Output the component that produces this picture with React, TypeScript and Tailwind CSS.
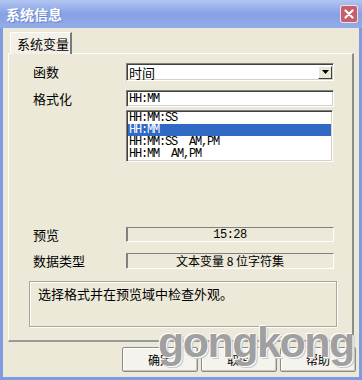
const cjk = { fontFamily: '"SimSun", "Noto Sans CJK SC", "Liberation Sans", sans-serif' };
const mono = { fontFamily: '"Liberation Mono", "Noto Sans CJK SC", monospace' };

const formats = ["HH:MM:SS", "HH:MM", "HH:MM:SS  AM,PM", "HH:MM  AM,PM"];

function Sunken({ className = "", children }: { className?: string; children?: React.ReactNode }) {
  return (
    <div
      className={
        "border border-t-[#808080] border-l-[#808080] border-b-white border-r-white shadow-[inset_1px_1px_0_#404040,inset_-1px_-1px_0_#d4d0c8] " +
        className
      }
    >
      {children}
    </div>
  );
}

function Label({ text }: { text: string }) {
  return (
    <div className="w-[93px] text-[13px] leading-[16px] text-black" style={cjk}>
      {text}
    </div>
  );
}

function Button({ text }: { text: string }) {
  return (
    <div
      className="w-[76px] h-[25px] flex items-center justify-center bg-[#f4f3ee] border border-[#8a8a8a] rounded-[2px] shadow-[inset_-1px_-1px_0_#c9c7ba,inset_1px_1px_0_#ffffff] text-[12px] text-black"
      style={cjk}
    >
      {text}
    </div>
  );
}

export default function App() {
  return (
    <div className="relative w-[362px] h-[380px] bg-[#7f9be0] flex flex-col overflow-hidden">
      {/* title bar */}
      <div className="h-[28px] flex items-center justify-between pl-[6px] pr-[4px] bg-gradient-to-b from-[#b3c6f2] via-[#87a1e4] to-[#93ace8]">
        <span className="text-white font-bold text-[14px] leading-none [text-shadow:1px_1px_0_#6a84c8]" style={cjk}>
          系统信息
        </span>
        <div className="w-[18px] h-[18px] rounded-[3px] bg-[#c45f6c] border border-white/80 flex items-center justify-center">
          <svg width="10" height="10" viewBox="0 0 10 10">
            <path d="M1.5 1.5 L8.5 8.5 M8.5 1.5 L1.5 8.5" stroke="white" strokeWidth="2.2" strokeLinecap="round" />
          </svg>
        </div>
      </div>

      {/* body */}
      <div className="flex-1 mx-[3px] mb-[3px] bg-[#ece9d8] pl-[5px] pr-[5px] pt-[4px] flex flex-col">
        {/* tab */}
        <div className="ml-[2px] w-[62px] h-[22px] bg-[#f3f1e7] border-t border-l border-white border-r-2 border-r-[#7a7a7a] flex items-center pl-[6px] text-[13px] text-black relative z-10 -mb-px" style={cjk}>
          系统变量
        </div>

        {/* panel */}
        <div className="w-[346px] h-[289px] border-t border-l border-white border-r-2 border-r-[#8c8c8c] border-b-2 border-b-[#9a9a9a] pl-[24px] pt-[9px] flex flex-col">
          {/* 函数 */}
          <div className="flex items-center h-[18px]">
            <Label text="函数" />
            <Sunken className="w-[208px] h-[18px] bg-white flex items-center pl-[2px]">
              <span className="flex-1 text-[13px] leading-none text-black" style={cjk}>
                时间
              </span>
              <div className="w-[14px] h-[13px] mr-[1px] bg-[#ece9d8] border border-t-white border-l-white border-b-[#404040] border-r-[#404040] flex items-center justify-center">
                <svg width="7" height="4" viewBox="0 0 7 4">
                  <path d="M0 0 H7 L3.5 4 Z" fill="black" />
                </svg>
              </div>
            </Sunken>
          </div>

          {/* 格式化 */}
          <div className="flex items-center mt-[9px] h-[17px]">
            <Label text="格式化" />
            <Sunken className="w-[208px] h-[17px] bg-white flex items-center pl-[2px]">
              <span className="text-[12px] tracking-[-1.2px] leading-none text-black" style={mono}>
                HH:MM
              </span>
            </Sunken>
          </div>

          {/* list */}
          <div className="flex mt-[3px]">
            <div className="w-[93px]" />
            <Sunken className="w-[207px] h-[52px] bg-white py-[1px] px-[1px] flex flex-col">
              {formats.map((f, i) => (
                <div
                  key={f}
                  className={
                    "h-[12px] flex items-center pl-[1px] text-[12px] tracking-[-1.2px] leading-none whitespace-pre " +
                    (i === 1 ? "bg-[#316ac5] text-white" : "text-black")
                  }
                  style={mono}
                >
                  {f}
                </div>
              ))}
            </Sunken>
          </div>

          {/* 预览 */}
          <div className="flex items-center mt-[65px] h-[15px]">
            <Label text="预览" />
            <div className="w-[208px] h-[15px] border border-t-[#808080] border-l-[#808080] border-b-white border-r-white shadow-[inset_1px_0_0_#808080] flex items-center justify-center text-[12px] tracking-[-0.5px] text-black" style={mono}>
              15:28
            </div>
          </div>

          {/* 数据类型 */}
          <div className="flex items-center mt-[11px] h-[16px]">
            <Label text="数据类型" />
            <div className="w-[208px] h-[16px] border border-t-[#808080] border-l-[#808080] border-b-white border-r-white shadow-[inset_1px_0_0_#808080] flex items-center justify-center text-[12px] text-black" style={cjk}>
              文本变量 8 位字符集
            </div>
          </div>

          {/* message */}
          <div className="-ml-[4px] mt-[12px] w-[308px] h-[46px] border border-[#a8a79a] shadow-[inset_1px_1px_0_#ffffff,1px_1px_0_#ffffff] px-[8px] pt-[4px] text-[13px] leading-[16px] text-black" style={cjk}>
            选择格式并在预览域中检查外观。
          </div>
        </div>

        {/* buttons */}
        <div className="flex justify-end gap-[3px] mt-[5px] mr-[-2px]">
          <Button text="确定" />
          <Button text="取消" />
          <Button text="帮助" />
        </div>
      </div>

      {/* watermark */}
      <div
        className="absolute left-[158px] top-[321px] text-[43px] font-bold tracking-[-1.5px] leading-none text-[#a0a0a0] pointer-events-none [text-shadow:1px_1px_0_#ffffff,-1px_-1px_0_#ffffff,2px_2px_0_#c8c8c8]"
        style={{ fontFamily: '"Liberation Sans", Arial, sans-serif' }}
      >
        gongkong
      </div>
    </div>
  );
}
